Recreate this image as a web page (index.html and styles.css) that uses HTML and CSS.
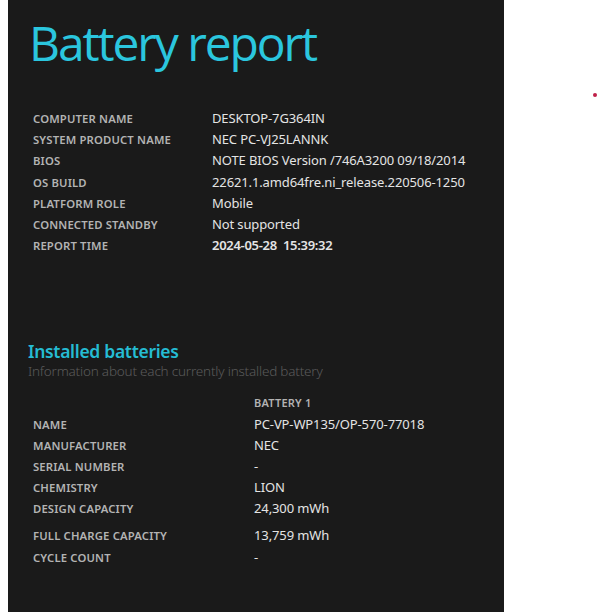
FILE: index.html
```html
<!DOCTYPE html>
<html>
<head>
<meta charset="utf-8">
<link rel="stylesheet" href="styles.css">
</head>
<body>
<div class="page">
  <main class="panel">
    <h1 class="title">Battery report</h1>
    <div class="info">
      <div class="lbl">COMPUTER NAME</div><div class="val">DESKTOP-7G364IN</div>
      <div class="lbl">SYSTEM PRODUCT NAME</div><div class="val">NEC PC-VJ25LANNK</div>
      <div class="lbl">BIOS</div><div class="val">NOTE BIOS Version /746A3200 09/18/2014</div>
      <div class="lbl">OS BUILD</div><div class="val">22621.1.amd64fre.ni_release.220506-1250</div>
      <div class="lbl">PLATFORM ROLE</div><div class="val">Mobile</div>
      <div class="lbl">CONNECTED STANDBY</div><div class="val">Not supported</div>
      <div class="lbl">REPORT TIME</div><div class="val strong">2024-05-28&nbsp;&nbsp;15:39:32</div>
    </div>
    <h2 class="section">Installed batteries</h2>
    <div class="sub">Information about each currently installed battery</div>
    <div class="batt">
      <div class="lbl"></div><div class="hdr">BATTERY 1</div>
      <div class="lbl">NAME</div><div class="val">PC-VP-WP135/OP-570-77018</div>
      <div class="lbl">MANUFACTURER</div><div class="val">NEC</div>
      <div class="lbl">SERIAL NUMBER</div><div class="val">-</div>
      <div class="lbl">CHEMISTRY</div><div class="val">LION</div>
      <div class="lbl">DESIGN CAPACITY</div><div class="val">24,300 mWh</div>
      <div class="lbl gap">FULL CHARGE CAPACITY</div><div class="val gap">13,759 mWh</div>
      <div class="lbl">CYCLE COUNT</div><div class="val">-</div>
    </div>
  </main>
  <div class="aside"><span class="dot"></span></div>
</div>
</body>
</html>
```

FILE: styles.css
```css
html, body {
  margin: 0;
  padding: 0;
  background: #ffffff;
}
.page {
  display: flex;
  width: 612px;
  height: 612px;
  overflow: hidden;
}
.panel {
  margin-left: 8px;
  width: 496px;
  height: 612px;
  background: #1a1a1a;
  box-sizing: border-box;
  padding: 14px 0 0 0;
  font-family: "Noto Sans", "Open Sans", sans-serif;
  color: #e2e2e2;
}
.title {
  margin: 0 0 0 21px;
  font-family: "Open Sans", sans-serif;
  font-weight: 400;
  font-size: 48px;
  line-height: 58px;
  letter-spacing: -2.1px;
  color: #2bc6de;
}
.info {
  display: grid;
  grid-template-columns: 179px auto;
  margin: 36px 0 0 25px;
  align-items: center;
}
.lbl, .val, .hdr {
  line-height: 21.2px;
  height: 21.2px;
}
.lbl {
  font-size: 11.3px;
  font-weight: 600;
  color: #b3b3b3;
  letter-spacing: 0.15px;
}
.val {
  font-size: 13px;
  color: #e4e4e4;
  letter-spacing: -0.12px;
}
.val.strong {
  font-weight: 600;
  letter-spacing: -0.3px;
}
.section {
  margin: 84px 0 0 20px;
  font-size: 17.5px;
  font-weight: 600;
  line-height: 22px;
  color: #25bcd3;
  letter-spacing: -0.3px;
}
.sub {
  margin: 0 0 0 20px;
  font-size: 13.5px;
  font-weight: 300;
  line-height: 18px;
  color: #5a5a5a;
  letter-spacing: -0.2px;
}
.batt {
  display: grid;
  grid-template-columns: 221px auto;
  margin: 12px 0 0 25px;
}
.hdr {
  font-size: 11px;
  font-weight: 600;
  color: #b3b3b3;
  letter-spacing: 0.2px;
}
.batt .gap {
  padding-top: 6px;
}
.aside {
  flex: 1;
  position: relative;
}
.dot {
  position: absolute;
  left: 89px;
  top: 93px;
  width: 4px;
  height: 4px;
  border-radius: 50%;
  background: #c02049;
}
```
